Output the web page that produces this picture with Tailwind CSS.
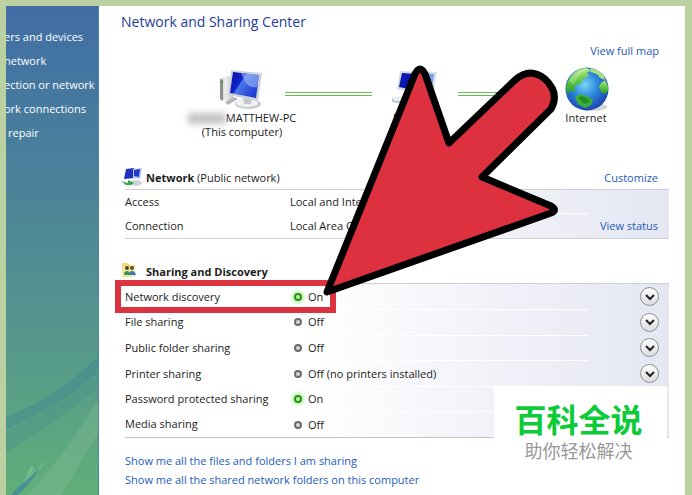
<!DOCTYPE html>
<html lang="en">
  <head>
    <meta charset="utf-8">
    <title>Network and Sharing Center</title>
    <script src="https://cdn.jsdelivr.net/npm/@tailwindcss/browser@4"></script>
  </head>

  <body class="bg-[#bbd1a1]">
    <div class="relative flex min-h-screen overflow-hidden pt-[6px] pr-[7px] pl-[6px] font-['Open_Sans','Noto_Sans_CJK_SC',sans-serif] text-[11px] leading-[14px] text-[#1c1c1c]">

      <!-- task list -->
      <nav class="relative w-[93px] shrink-0 overflow-hidden border-r border-[#4a86a0] bg-linear-to-b from-[#416da5] via-[#4f8b94] to-[#61ae79] text-white">
        <svg class="absolute bottom-0 left-0 h-[150px] w-full" viewBox="0 0 93 150" preserveAspectRatio="none">
          <path d="M0 72C35 58 65 38 93 12V28C62 55 30 70 0 85Z" fill="#3f8693" opacity=".45"/>
          <path d="M0 86C35 70 65 52 93 30V42C60 72 30 88 0 108Z" fill="#4b9089" opacity=".4"/>
          <path d="M22 150C50 120 75 85 93 55V88L56 150Z" fill="#7fba94" opacity=".4"/>
          <path d="M17 140L25 121L29 123L24 129L41 116L16 144Z" fill="#7cc593" opacity=".7"/>
          <path d="M5 150C12 142 22 135 34 122C28 135 18 144 12 150Z" fill="#418a99" opacity=".8"/>
        </svg>
        <ul class="relative flex flex-col gap-[10px] pt-[24px] whitespace-nowrap">
          <li><a href="#" class="-ml-[2px]">ers and devices</a></li>
          <li><a href="#" class="-ml-[2px]">network</a></li>
          <li><a href="#" class="-ml-[2px]">ection or network</a></li>
          <li><a href="#" class="-ml-[2px]">ork connections</a></li>
          <li><a href="#" class="ml-[2px]">repair</a></li>
        </ul>
      </nav>

      <main class="min-w-0 flex-1 bg-white pr-4 pl-[26px]">
        <h1 class="-ml-1 pt-[6px] text-[14px] leading-5 text-[#1f3d99]">Network and Sharing Center</h1>
        <div class="mt-[12px] flex justify-end pr-[10px]">
          <a href="#" class="text-[#1d5cba]">View full map</a>
        </div>

        <!-- network map -->
        <div class="mt-[9px] flex h-[74px] gap-5 pl-[94px] whitespace-nowrap">
          <div class="flex w-[46px] flex-col items-center">
            <svg class="h-[44px] w-[46px] shrink-0" viewBox="0 0 46 44">
              <defs>
                <linearGradient id="screen" x1="0" y1="0" x2="1" y2=".6">
                  <stop offset="0" stop-color="#0712a5"/>
                  <stop offset=".42" stop-color="#1022cc"/>
                  <stop offset=".48" stop-color="#4d77ec"/>
                  <stop offset="1" stop-color="#1b3bd0"/>
                </linearGradient>
                <linearGradient id="case" x1="0" x2="1">
                  <stop offset="0" stop-color="#b9bcb9"/>
                  <stop offset=".4" stop-color="#eeefee"/>
                  <stop offset="1" stop-color="#c8cccc"/>
                </linearGradient>
              </defs>
              <path d="M1 12L8 9L14 10V31L7 34L1 32Z" fill="url(#case)"/>
              <path d="M1 12L4 13V34L1 32Z" fill="#8d928e"/>
              <circle cx="3" cy="15" r="1" fill="#3a9a2c"/>
              <path d="M6 35L15 30L19 32L9 38Z" fill="#b2b5b7"/>
              <ellipse cx="29" cy="37" rx="13" ry="5" fill="#c9ccce"/>
              <ellipse cx="28" cy="36" rx="11" ry="4" fill="#f0f1f2"/>
              <path d="M24 29L33 31L32 37H25Z" fill="#c4c8cb"/>
              <path d="M12 3L43 6L39 34L9 28Z" fill="#cfd3d8"/>
              <path d="M14 5L40 8L37 31L11 26Z" fill="url(#screen)"/>
              <path d="M22 6L40 8L38 20C30 21 27 18 22 6Z" fill="#a8c1fa" opacity=".55"/>
            </svg>
            <div class="flex items-center">
              <span class="h-[11px] w-[38px] bg-[#aaa] opacity-70 blur-[3px]"></span>
              <span>MATTHEW-PC</span>
            </div>
            <span>(This computer)</span>
          </div>
          <div class="mt-[25px] h-[4px] w-[87px] border-y border-[#6cb95c]"></div>
          <div class="flex w-[46px] flex-col items-center">
            <svg class="h-[44px] w-[46px] shrink-0" viewBox="0 0 46 44">
              <path d="M8 4L26 5L24 26L5 22Z" fill="#d2d8e4"/>
              <path d="M10 6L24 7L22 23L7 20Z" fill="#0a18ad"/>
              <path d="M26 4L45 5L42 24L26 22Z" fill="#dde2ea"/>
              <path d="M27 6L42 7L40 21L27 20Z" fill="#7c9be8"/>
              <ellipse cx="7" cy="33" rx="8" ry="3" fill="#b9c4c8"/>
              <ellipse cx="6" cy="32" rx="5" ry="2" fill="#eef2f3"/>
            </svg>
            <span>Network</span>
          </div>
          <div class="mt-[25px] h-[4px] w-[87px] border-y border-[#6cb95c]"></div>
          <div class="flex w-[46px] flex-col items-center">
            <svg class="h-[44px] w-[46px] shrink-0" viewBox="0 0 46 44">
              <defs>
                <radialGradient id="sea" cx=".45" cy=".4" r=".6">
                  <stop offset="0" stop-color="#7cd4f4"/>
                  <stop offset=".5" stop-color="#2c86dc"/>
                  <stop offset="1" stop-color="#1c45b0"/>
                </radialGradient>
                <linearGradient id="land" x1="0" y1="0" x2="0" y2="1">
                  <stop offset="0" stop-color="#b2e884"/>
                  <stop offset=".5" stop-color="#5cc93e"/>
                  <stop offset="1" stop-color="#2a9632"/>
                </linearGradient>
              </defs>
              <ellipse cx="28" cy="40" rx="14" ry="4" fill="#d4d4d4"/>
              <circle cx="22" cy="22" r="21.500" fill="url(#sea)"/>
              <path d="M4 12C8 5 14 1 21 1L26 3L22 6L24 9L19 11L16 16L11 18L9 22L11 25L6 24L2 27L1 20Q2 16 4 12Z" fill="url(#land)"/>
              <path d="M26 1L34 4L39 9L40 13L35 11L33 8L29 6L25 5Z" fill="#a9e07c"/>
              <path d="M36 16L40 13L43 19L43 24L40 27L36 25L34 20Z" fill="url(#land)"/>
              <path d="M10 30L15 27L22 29L28 33L26 38L20 41L13 37Z" fill="#3fae36"/>
              <path d="M13 31L17 29L23 32L25 35L19 37Z" fill="#238d2b"/>
              <path d="M4 14C9 5 18 1 25 2C18 4 12 10 9 18Z" fill="#fff" opacity=".25"/>
            </svg>
            <span class="-ml-1">Internet</span>
          </div>
        </div>

        <!-- network details -->
        <section>
          <div class="flex h-[49px] items-end gap-[2px] border-b border-[#cfcfd4] pb-[4px]">
            <svg class="-mb-[2px] -ml-1 h-[20px] w-[23px]" viewBox="0 0 23 20">
              <path d="M5 2L13 1L14 11L3 12Z" fill="#2431bd"/>
              <path d="M12 2L21 1L19 12L12 11Z" fill="#b9c8ec"/>
              <path d="M13 3L19 2L18 10L13 9Z" fill="#2639c9"/>
              <ellipse cx="15" cy="16" rx="6" ry="3" fill="#ccd3da"/>
              <path d="M0 14L7 16V13L13 16L10 18H5Z" fill="#35a64a"/>
            </svg>
            <h2><b class="font-bold">Network</b> (Public network)</h2>
            <a href="#" class="ml-auto pr-[11px] text-[#1d5cba]">Customize</a>
          </div>
          <table class="h-[49px] w-full border-b border-[#cfcfd4] bg-linear-to-r from-white from-35% to-[#e4e6f2]">
            <tbody>
              <tr>
                <td class="w-[165px]">Access</td>
                <td class="border-b border-white">Local and Internet</td>
                <td class="w-[81px]"></td>
              </tr>
              <tr>
                <td>Connection</td>
                <td>Local Area Connection</td>
                <td class="pr-[11px] text-right whitespace-nowrap"><a href="#" class="text-[#1d5cba]">View status</a></td>
              </tr>
            </tbody>
          </table>
        </section>

        <!-- sharing settings -->
        <section class="relative">
          <div class="flex h-[45px] items-end gap-[9px] border-b border-[#cfcfd4] pb-[4px]">
            <svg class="-ml-1 h-[17px] w-[16px]" viewBox="0 0 16 17">
              <path d="M1 1H7L9 3H14V15H1Z" fill="#eedc80"/>
              <path d="M2 5H14V15L1 14Z" fill="#f6eaa5"/>
              <circle cx="6" cy="6" r="2" fill="#4f4a25"/>
              <circle cx="11" cy="6" r="2" fill="#5b4e2d"/>
              <path d="M3 13Q3 9 6 9T9 13Z" fill="#379457"/>
              <path d="M8 13Q8 9 11 9T15 13Z" fill="#367cae"/>
            </svg>
            <h2 class="font-bold">Sharing and Discovery</h2>
          </div>
          <table class="h-[154px] w-full border-b border-[#c4c4c8] bg-linear-to-r from-white from-35% to-[#e4e6f2]">
            <tbody>
              <tr class="h-[25px]">
                <td class="w-[165px] p-0">Network discovery</td>
                <td class="border-b border-white p-0"><span class="ml-1 inline-block size-[8px] rounded-full border-2 border-[#2f8f20] bg-[#b9f5a0] shadow-[0_0_4px_1px_#7fe860]"></span><span class="ml-[6px]">On</span></td>
                <td class="w-[81px] py-0 pr-[10px]"><button type="button" aria-label="Expand network discovery" class="ml-auto flex size-[19px] items-center justify-center rounded-full border border-[#8d8f94] bg-linear-to-b from-white to-[#dcdde1]"><svg class="size-[10px]" viewBox="0 0 10 10"><path d="M1 3L5 7L9 3" fill="none" stroke="#222" stroke-width="2"/></svg></button></td>
              </tr>
              <tr class="h-[25px]">
                <td class="p-0">File sharing</td>
                <td class="border-b border-white p-0"><span class="ml-1 inline-block size-[8px] rounded-full border-2 border-[#6b6b6b] bg-[#d8d8d8]"></span><span class="ml-[6px]">Off</span></td>
                <td class="py-0 pr-[10px]"><button type="button" aria-label="Expand file sharing" class="ml-auto flex size-[19px] items-center justify-center rounded-full border border-[#8d8f94] bg-linear-to-b from-white to-[#dcdde1]"><svg class="size-[10px]" viewBox="0 0 10 10"><path d="M1 3L5 7L9 3" fill="none" stroke="#222" stroke-width="2"/></svg></button></td>
              </tr>
              <tr class="h-[25px]">
                <td class="p-0">Public folder sharing</td>
                <td class="border-b border-white p-0"><span class="ml-1 inline-block size-[8px] rounded-full border-2 border-[#6b6b6b] bg-[#d8d8d8]"></span><span class="ml-[6px]">Off</span></td>
                <td class="py-0 pr-[10px]"><button type="button" aria-label="Expand public folder sharing" class="ml-auto flex size-[19px] items-center justify-center rounded-full border border-[#8d8f94] bg-linear-to-b from-white to-[#dcdde1]"><svg class="size-[10px]" viewBox="0 0 10 10"><path d="M1 3L5 7L9 3" fill="none" stroke="#222" stroke-width="2"/></svg></button></td>
              </tr>
              <tr class="h-[25px]">
                <td class="p-0">Printer sharing</td>
                <td class="border-b border-white p-0"><span class="ml-1 inline-block size-[8px] rounded-full border-2 border-[#6b6b6b] bg-[#d8d8d8]"></span><span class="ml-[6px]">Off (no printers installed)</span></td>
                <td class="py-0 pr-[10px]"><button type="button" aria-label="Expand printer sharing" class="ml-auto flex size-[19px] items-center justify-center rounded-full border border-[#8d8f94] bg-linear-to-b from-white to-[#dcdde1]"><svg class="size-[10px]" viewBox="0 0 10 10"><path d="M1 3L5 7L9 3" fill="none" stroke="#222" stroke-width="2"/></svg></button></td>
              </tr>
              <tr class="h-[25px]">
                <td class="p-0">Password protected sharing</td>
                <td class="border-b border-white p-0"><span class="ml-1 inline-block size-[8px] rounded-full border-2 border-[#2f8f20] bg-[#b9f5a0] shadow-[0_0_4px_1px_#7fe860]"></span><span class="ml-[6px]">On</span></td>
                <td></td>
              </tr>
              <tr class="h-[25px]">
                <td class="p-0">Media sharing</td>
                <td class="p-0"><span class="ml-1 inline-block size-[8px] rounded-full border-2 border-[#6b6b6b] bg-[#d8d8d8]"></span><span class="ml-[6px]">Off</span></td>
                <td></td>
              </tr>
            </tbody>
          </table>
          <!-- highlight round the first row -->
          <div class="absolute top-[41px] -left-[10px] h-[33px] w-[221px] border-6 border-[#dc3340]"></div>
        </section>

        <div class="mt-[16px] flex flex-col items-start gap-[5px] text-[#1d5cba]">
          <a href="#">Show me all the files and folders I am sharing</a>
          <a href="#">Show me all the shared network folders on this computer</a>
        </div>
      </main>

      <!-- pointer arrow -->
      <svg class="absolute top-[60px] left-[318px] h-[242px] w-[246px]" viewBox="318 60 246 242">
        <path d="M327 292L415 74Q420 64 425 74L449 143L515 80Q530 67 545 79Q560 93 551 109L482 177L551 206Q558 210 551 213Z" fill="#de3140" stroke="#000" stroke-width="7" stroke-linejoin="round"/>
      </svg>

      <!-- site badge -->
      <div class="absolute top-[386px] right-[25px] flex h-[109px] w-[173px] flex-col items-center bg-white pt-[15px] pr-1">
        <span class="text-[32px] leading-[38px] font-bold text-[#0ccb38]">百科全说</span>
        <span class="mt-[2px] text-[18px] leading-[20px] text-[#999]">助你轻松解决</span>
      </div>
    </div>
  </body>
</html>
